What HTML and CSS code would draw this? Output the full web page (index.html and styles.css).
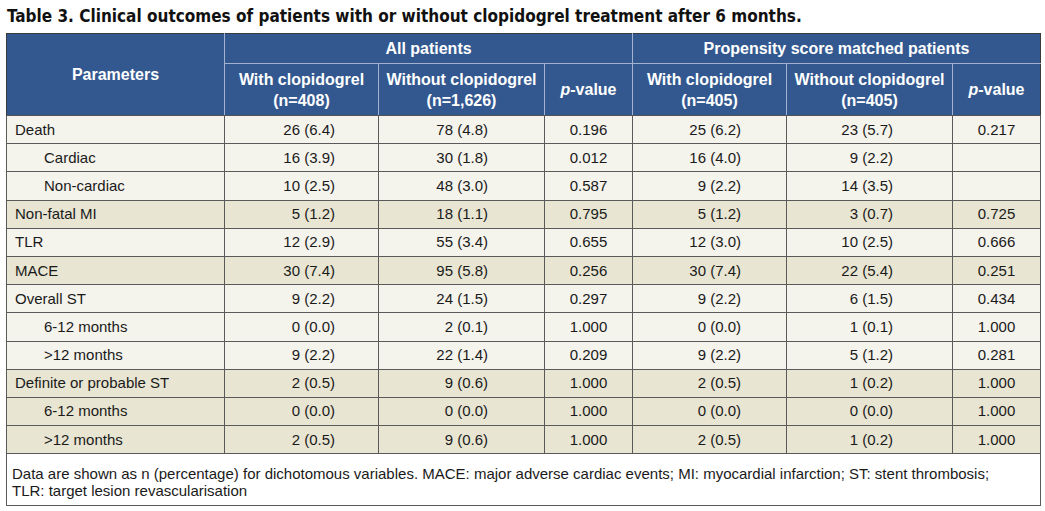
FILE: index.html
```html
<!DOCTYPE html>
<html lang="en">
<head>
<meta charset="utf-8">
<title>Table 3</title>
<link rel="stylesheet" href="styles.css">
</head>
<body>
<h1 class="title">Table 3. Clinical outcomes of patients with or without clopidogrel treatment after 6 months.</h1>
<table class="outcomes">
  <colgroup>
    <col class="c-param">
    <col class="c-n">
    <col class="c-n2">
    <col class="c-p">
    <col class="c-n">
    <col class="c-n2">
    <col class="c-p">
  </colgroup>
  <thead>
    <tr class="group">
      <th rowspan="2" class="param-head">Parameters</th>
      <th colspan="3">All patients</th>
      <th colspan="3">Propensity score matched patients</th>
    </tr>
    <tr class="sub">
      <th>With clopidogrel<br>(n=408)</th>
      <th>Without clopidogrel<br>(n=1,626)</th>
      <th><i>p</i>-value</th>
      <th>With clopidogrel<br>(n=405)</th>
      <th>Without clopidogrel<br>(n=405)</th>
      <th><i>p</i>-value</th>
    </tr>
  </thead>
  <tbody>
    <tr class="light"><td>Death</td><td>26 (6.4)</td><td>78 (4.8)</td><td>0.196</td><td>25 (6.2)</td><td>23 (5.7)</td><td>0.217</td></tr>
    <tr class="light"><td class="sub-item">Cardiac</td><td>16 (3.9)</td><td>30 (1.8)</td><td>0.012</td><td>16 (4.0)</td><td>9 (2.2)</td><td></td></tr>
    <tr class="light"><td class="sub-item">Non-cardiac</td><td>10 (2.5)</td><td>48 (3.0)</td><td>0.587</td><td>9 (2.2)</td><td>14 (3.5)</td><td></td></tr>
    <tr class="beige"><td>Non-fatal MI</td><td>5 (1.2)</td><td>18 (1.1)</td><td>0.795</td><td>5 (1.2)</td><td>3 (0.7)</td><td>0.725</td></tr>
    <tr class="light"><td>TLR</td><td>12 (2.9)</td><td>55 (3.4)</td><td>0.655</td><td>12 (3.0)</td><td>10 (2.5)</td><td>0.666</td></tr>
    <tr class="beige"><td>MACE</td><td>30 (7.4)</td><td>95 (5.8)</td><td>0.256</td><td>30 (7.4)</td><td>22 (5.4)</td><td>0.251</td></tr>
    <tr class="light"><td>Overall ST</td><td>9 (2.2)</td><td>24 (1.5)</td><td>0.297</td><td>9 (2.2)</td><td>6 (1.5)</td><td>0.434</td></tr>
    <tr class="light"><td class="sub-item">6-12 months</td><td>0 (0.0)</td><td>2 (0.1)</td><td>1.000</td><td>0 (0.0)</td><td>1 (0.1)</td><td>1.000</td></tr>
    <tr class="light"><td class="sub-item">&gt;12 months</td><td>9 (2.2)</td><td>22 (1.4)</td><td>0.209</td><td>9 (2.2)</td><td>5 (1.2)</td><td>0.281</td></tr>
    <tr class="beige"><td>Definite or probable ST</td><td>2 (0.5)</td><td>9 (0.6)</td><td>1.000</td><td>2 (0.5)</td><td>1 (0.2)</td><td>1.000</td></tr>
    <tr class="beige"><td class="sub-item">6-12 months</td><td>0 (0.0)</td><td>0 (0.0)</td><td>1.000</td><td>0 (0.0)</td><td>0 (0.0)</td><td>1.000</td></tr>
    <tr class="beige"><td class="sub-item">&gt;12 months</td><td>2 (0.5)</td><td>9 (0.6)</td><td>1.000</td><td>2 (0.5)</td><td>1 (0.2)</td><td>1.000</td></tr>
  </tbody>
  <tfoot>
    <tr>
      <td colspan="7" class="note">Data are shown as n (percentage) for dichotomous variables. MACE: major adverse cardiac events; MI: myocardial infarction; ST: stent thrombosis;<br>TLR: target lesion revascularisation</td>
    </tr>
  </tfoot>
</table>
</body>
</html>
```

FILE: styles.css
```css
html, body {
  margin: 0;
  padding: 0;
  background: #ffffff;
}

body {
  padding: 7px 0 0 6px;
  font-family: "Liberation Sans", Arial, sans-serif;
  color: #1a1a1a;
}

.title {
  margin: 0 0 7px 1px;
  font-family: "DejaVu Sans Condensed", "DejaVu Sans", sans-serif;
  font-stretch: condensed;
  font-weight: bold;
  font-size: 17px;
  line-height: 19px;
  color: #111111;
  white-space: nowrap;
}

.outcomes {
  border-collapse: collapse;
  table-layout: fixed;
  width: 1034px;
  font-size: 15px;
  border: 1px solid #3a3a3a;
}

.c-param { width: 218px; }
.c-n { width: 154px; }
.c-n2 { width: 166px; }
.c-p { width: 88px; }

.outcomes thead th {
  background: #33588f;
  color: #ffffff;
  font-weight: bold;
  font-size: 16px;
  line-height: 21px;
  padding: 0;
  text-align: center;
  border: 1px solid #a3b3cf;
}

.outcomes thead tr.group th {
  height: 29px;
  border-top-color: #3a3a3a;
}

.outcomes thead tr.sub th {
  height: 51px;
  border-bottom-color: #555555;
}

.outcomes thead th:first-child {
  border-left-color: #3a3a3a;
}

.outcomes thead th:last-child {
  border-right-color: #3a3a3a;
}

.outcomes thead th.param-head {
  border-bottom-color: #555555;
  border-left-color: #3a3a3a;
}

.outcomes thead i {
  font-style: italic;
}

.outcomes tbody td {
  height: 27.2px;
  padding: 0;
  border: 1px solid #5a5a5a;
  line-height: 18px;
  text-align: center;
  white-space: nowrap;
}

.outcomes tbody td:first-child {
  text-align: left;
  padding-left: 8px;
}

.outcomes tbody td.sub-item {
  padding-left: 37px;
}

.outcomes tbody td:nth-child(2) {
  text-align: right;
  padding-right: 43px;
}

.outcomes tbody td:nth-child(3) {
  text-align: right;
  padding-right: 56px;
}

.outcomes tbody td:nth-child(5) {
  text-align: right;
  padding-right: 45px;
}

.outcomes tbody td:nth-child(6) {
  text-align: right;
  padding-right: 59px;
}

.outcomes tr.light td {
  background: #f4f3ec;
}

.outcomes tr.beige td {
  background: #e8e5d2;
}

.outcomes tfoot td.note {
  background: #ffffff;
  border: 1px solid #5a5a5a;
  padding: 11px 5px 6px 5px;
  font-size: 15px;
  line-height: 17px;
  text-align: left;
}
```
